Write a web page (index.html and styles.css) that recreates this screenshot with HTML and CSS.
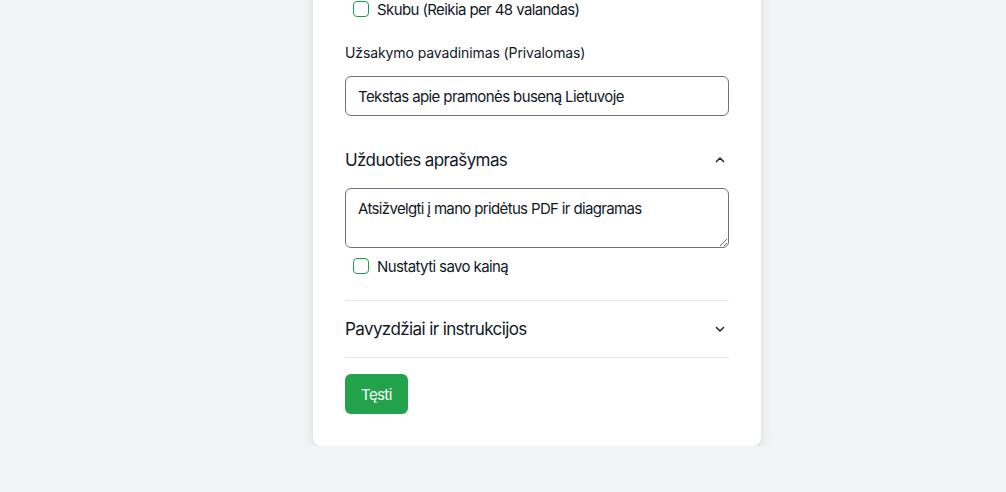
FILE: index.html
```html
<!DOCTYPE html>
<html lang="lt">

<head>
  <meta charset="UTF-8">
  <meta name="viewport" content="width=device-width, initial-scale=1.0">
  <title>Užsakymas</title>
  <link rel="stylesheet" href="styles.css">
</head>

<body>

  <div class="page">
    <form class="card">

      <label class="check">
        <input type="checkbox">
        <span>Skubu (Reikia per 48 valandas)</span>
      </label>

      <div class="field">
        <label class="field-label" for="title">Užsakymo pavadinimas (Privalomas)</label>
        <input class="input" id="title" type="text" value="Tekstas apie pramonės buseną Lietuvoje">
      </div>

      <div class="section open">
        <div class="section-head">
          <span>Užduoties aprašymas</span>
          <svg width="12" height="12" viewBox="0 0 12 12"><polyline points="2.5,7.5 6,4 9.5,7.5" fill="none" stroke="#1f2937" stroke-width="1.6" stroke-linecap="round" stroke-linejoin="round"/></svg>
        </div>
        <div class="section-body">
          <textarea class="textarea">Atsižvelgti į mano pridėtus PDF ir diagramas</textarea>
          <label class="check">
            <input type="checkbox">
            <span>Nustatyti savo kainą</span>
          </label>
        </div>
      </div>

      <div class="section bordered">
        <div class="section-head">
          <span>Pavyzdžiai ir instrukcijos</span>
          <svg width="12" height="12" viewBox="0 0 12 12"><polyline points="2.5,4.5 6,8 9.5,4.5" fill="none" stroke="#1f2937" stroke-width="1.6" stroke-linecap="round" stroke-linejoin="round"/></svg>
        </div>
      </div>

      <div class="actions">
        <button class="btn" type="button">Tęsti</button>
      </div>

    </form>
  </div>

</body>

</html>
```

FILE: styles.css
```css
* {
  margin: 0;
  padding: 0;
  box-sizing: border-box;
}

body {
  background: #f3f4f6;
  font-family: Inter, "Noto Sans", sans-serif;
  color: #111827;
}

.page {
  padding-left: 313px;
}

.card {
  width: 448px;
  margin-top: -33px;
  padding: 32px;
  background: #fff;
  border-radius: 8px;
  box-shadow: 0 4px 14px rgba(0, 0, 0, .09), 0 1px 3px rgba(0, 0, 0, .06);
}

.check {
  display: flex;
  align-items: center;
  gap: 8px;
  height: 20px;
  padding-left: 8px;
  font-size: 15px;
  letter-spacing: -.6px;
  cursor: pointer;
}

.check input {
  appearance: none;
  width: 16px;
  height: 16px;
  border: 1.5px solid #16a34a;
  border-radius: 4px;
  background: #fff;
}

.field {
  margin-top: 24px;
}

.field-label {
  display: block;
  font-size: 14px;
  line-height: 20px;
  letter-spacing: -.1px;
  margin-bottom: 13px;
}

.input,
.textarea {
  display: block;
  width: 100%;
  border: 1px solid #6b7280;
  border-radius: 6px;
  padding: 0 12px;
  font-family: inherit;
  font-size: 15px;
  letter-spacing: -.6px;
  color: #111827;
  outline: none;
}

.input {
  height: 40px;
}

.textarea {
  height: 60px;
  padding-top: 10px;
  line-height: 20px;
  letter-spacing: -.65px;
  resize: vertical;
}

.section-head {
  display: flex;
  align-items: center;
  justify-content: space-between;
  font-size: 17px;
  line-height: 24px;
  letter-spacing: -.6px;
  padding-right: 3px;
}

.section.open {
  margin-top: 32px;
  padding-bottom: 24px;
}

.section.open .section-head {
  margin-bottom: 16px;
}

.section.open .check {
  margin-top: 8px;
}

.section.bordered {
  border-top: 1px solid #e5e7eb;
  border-bottom: 1px solid #e5e7eb;
  padding: 16px 0;
}

.actions {
  margin-top: 16px;
}

.btn {
  height: 40px;
  padding: 0 16px;
  border: 0;
  border-radius: 6px;
  background: #22a34b;
  color: #fff;
  font-family: inherit;
  font-size: 15px;
  letter-spacing: -.6px;
  cursor: pointer;
}
```
